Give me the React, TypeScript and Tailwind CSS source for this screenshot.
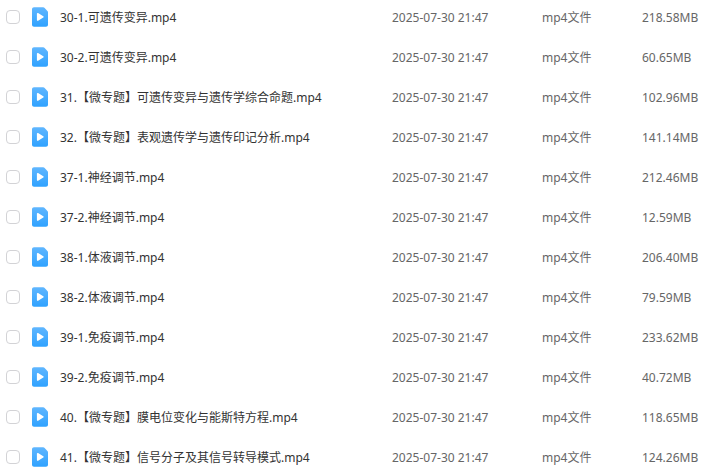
import { useState } from 'react';

interface FileItem {
  name: string;
  size: string;
}

const MODIFIED = '2025-07-30 21:47';

const files: FileItem[] = [
  { name: '30-1.可遗传变异.mp4', size: '218.58MB' },
  { name: '30-2.可遗传变异.mp4', size: '60.65MB' },
  { name: '31.【微专题】可遗传变异与遗传学综合命题.mp4', size: '102.96MB' },
  { name: '32.【微专题】表观遗传学与遗传印记分析.mp4', size: '141.14MB' },
  { name: '37-1.神经调节.mp4', size: '212.46MB' },
  { name: '37-2.神经调节.mp4', size: '12.59MB' },
  { name: '38-1.体液调节.mp4', size: '206.40MB' },
  { name: '38-2.体液调节.mp4', size: '79.59MB' },
  { name: '39-1.免疫调节.mp4', size: '233.62MB' },
  { name: '39-2.免疫调节.mp4', size: '40.72MB' },
  { name: '40.【微专题】膜电位变化与能斯特方程.mp4', size: '118.65MB' },
  { name: '41.【微专题】信号分子及其信号转导模式.mp4', size: '124.26MB' },
];

function VideoIcon() {
  return (
    <svg width="16" height="20" viewBox="0 0 16 20" className="shrink-0" aria-hidden="true">
      <defs>
        <linearGradient id="video-bg" x1="0" y1="0" x2="0" y2="1">
          <stop offset="0" stopColor="#5fb6ff" />
          <stop offset="1" stopColor="#2fa2ff" />
        </linearGradient>
      </defs>
      <path
        d="M2 .3h9.200c.5 0 .9.2 1.200.5l3 3.100c.4.4.6.8.6 1.300V17.700c0 1.100-.9 2-2 2H2c-1.100 0-2-.9-2-2V2.300C0 1.200.9.300 2 .300z"
        fill="url(#video-bg)"
      />
      <path d="M4.900 6.700v6.400c0 .7.600 1 1.200.7l5.200-3.200c.5-.3.5-1.100 0-1.400L6.100 6c-.6-.3-1.200 0-1.200.7z" fill="#fff" />
    </svg>
  );
}

export default function App() {
  const [selected, setSelected] = useState<string[]>([]);

  const toggle = (name: string) => {
    setSelected((prev) =>
      prev.includes(name) ? prev.filter((n) => n !== name) : [...prev, name]
    );
  };

  return (
    <div className="h-screen overflow-hidden bg-white font-['Noto_Sans','Noto_Sans_CJK_SC',sans-serif] text-xs text-[#666]">
      <table className="-mt-[3px] w-full table-fixed whitespace-nowrap">
        <colgroup>
          <col />
          <col className="w-[150px]" />
          <col className="w-[100px]" />
          <col className="w-[62px]" />
        </colgroup>
        <tbody>
          {files.map((file) => (
            <tr key={file.name} className="h-10">
              <td className="p-0">
                <label className="flex items-center pl-1.5">
                  <input
                    type="checkbox"
                    checked={selected.includes(file.name)}
                    onChange={() => toggle(file.name)}
                    className="size-3.5 shrink-0 appearance-none rounded-sm border border-[#d3d3d6] bg-white checked:border-[#2fa2ff] checked:bg-[#2fa2ff]"
                  />
                  <span className="flex items-center gap-3 pl-3">
                    <VideoIcon />
                    <span className="pt-0.5 text-[#333]">{file.name}</span>
                  </span>
                </label>
              </td>
              <td className="p-0 pt-0.5">{MODIFIED}</td>
              <td className="p-0 pt-0.5">mp4文件</td>
              <td className="p-0 pt-0.5">{file.size}</td>
            </tr>
          ))}
        </tbody>
      </table>
    </div>
  );
}
